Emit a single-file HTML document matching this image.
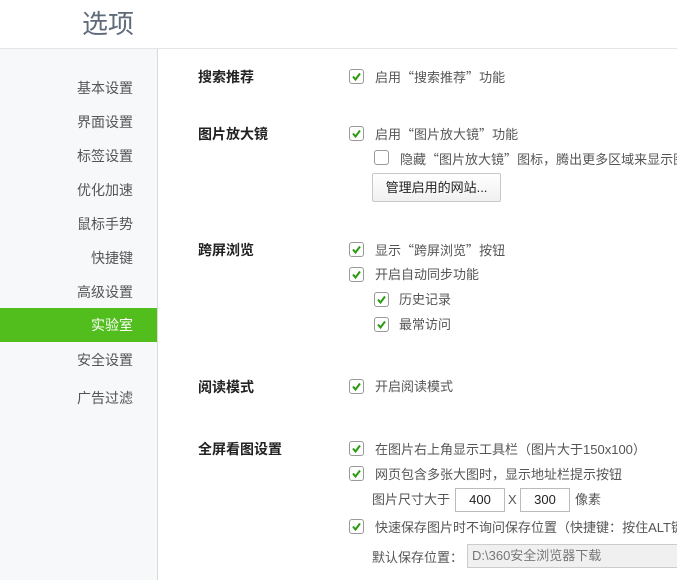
<!DOCTYPE html><html><head><meta charset="utf-8"><style>
body{margin:0;width:677px;height:580px;overflow:hidden;background:#fff;font-family:"Liberation Sans","Noto Sans CJK SC",sans-serif;font-size:13px;color:#555;position:relative}
.a{position:absolute;white-space:nowrap;line-height:16px}
.q{font-family:"Noto Sans CJK SC",sans-serif}
#hd{position:absolute;left:0;top:0;width:677px;height:48px;border-bottom:1px solid #e5e5e5}
#hd span{position:absolute;left:82px;top:8px;font-size:26px;color:#5f6b78;line-height:32px}
#sb{position:absolute;left:0;top:49px;width:157px;height:531px;background:#f7f8fa;border-right:1px solid #d9d9d9}
.si{position:absolute;right:24px;font-size:14px;color:#555;line-height:16px}
#act{position:absolute;left:0;top:308px;width:157px;height:34px;background:#52be1e}
.h{position:absolute;left:198px;font-weight:bold;color:#222;line-height:16px;font-size:14px}
.cb{position:absolute;width:13px;height:13px;border:1px solid #999;border-radius:3px;background:#fff}
.cb svg{position:absolute;left:1px;top:1px}
.btn{position:absolute;border:1px solid #c8c8c8;border-radius:2px;background:linear-gradient(#fff,#f0f0f0);color:#222;text-align:center}
.in{position:absolute;border:1px solid #bbb;background:#fff;color:#222;text-align:center;line-height:22px;height:22px}
</style></head><body>
<div id="hd"><span>选项</span></div>
<div id="sb">
<div class="si" style="top:31px">基本设置</div>
<div class="si" style="top:65px">界面设置</div>
<div class="si" style="top:99px">标签设置</div>
<div class="si" style="top:133px">优化加速</div>
<div class="si" style="top:167px">鼠标手势</div>
<div class="si" style="top:201px">快捷键</div>
<div class="si" style="top:235px">高级设置</div>
<div class="si" style="top:303px">安全设置</div>
<div class="si" style="top:341px">广告过滤</div>
</div>
<div id="act"></div><div class="a" style="left:91px;top:317px;color:#fff;font-size:14px">实验室</div>

<div class="h" style="top:69px">搜索推荐</div>
<div class="h" style="top:126px">图片放大镜</div>
<div class="h" style="top:242px">跨屏浏览</div>
<div class="h" style="top:379px">阅读模式</div>
<div class="h" style="top:441px">全屏看图设置</div>

<svg width="0" height="0" style="position:absolute"><defs><symbol id="ck" viewBox="0 0 11 11"><path d="M2 5.5 L4.5 8.5 L9 2.5" stroke="#2a9a10" stroke-width="2" fill="none"/></symbol></defs></svg>

<div class="cb" style="left:349px;top:69px"><svg width="11" height="11"><use href="#ck"/></svg></div><div class="a" style="left:375px;top:69px">启用<span class="q">“</span>搜索推荐<span class="q">”</span>功能</div>
<div class="cb" style="left:349px;top:126px"><svg width="11" height="11"><use href="#ck"/></svg></div><div class="a" style="left:375px;top:126px">启用<span class="q">“</span>图片放大镜<span class="q">”</span>功能</div>
<div class="cb" style="left:374px;top:150px"></div><div class="a" style="left:400px;top:151px">隐藏<span class="q">“</span>图片放大镜<span class="q">”</span>图标，腾出更多区域来显示图</div>
<div class="btn" style="left:372px;top:173px;width:127px;height:27px;line-height:27px">管理启用的网站...</div>

<div class="cb" style="left:349px;top:242px"><svg width="11" height="11"><use href="#ck"/></svg></div><div class="a" style="left:375px;top:242px">显示<span class="q">“</span>跨屏浏览<span class="q">”</span>按钮</div>
<div class="cb" style="left:349px;top:267px"><svg width="11" height="11"><use href="#ck"/></svg></div><div class="a" style="left:375px;top:267px">开启自动同步功能</div>
<div class="cb" style="left:374px;top:292px"><svg width="11" height="11"><use href="#ck"/></svg></div><div class="a" style="left:399px;top:292px">历史记录</div>
<div class="cb" style="left:374px;top:317px"><svg width="11" height="11"><use href="#ck"/></svg></div><div class="a" style="left:399px;top:317px">最常访问</div>

<div class="cb" style="left:349px;top:379px"><svg width="11" height="11"><use href="#ck"/></svg></div><div class="a" style="left:375px;top:379px">开启阅读模式</div>

<div class="cb" style="left:349px;top:441px"><svg width="11" height="11"><use href="#ck"/></svg></div><div class="a" style="left:375px;top:441px">在图片右上角显示工具栏<span class="q">（</span>图片大于150x100<span class="q">）</span></div>
<div class="cb" style="left:349px;top:466px"><svg width="11" height="11"><use href="#ck"/></svg></div><div class="a" style="left:375px;top:466px">网页包含多张大图时<span class="q">，</span>显示地址栏提示按钮</div>
<div class="a" style="left:372px;top:492px">图片尺寸大于</div>
<div class="in" style="left:455px;top:488px;width:48px">400</div>
<div class="a" style="left:508px;top:492px">X</div>
<div class="in" style="left:520px;top:488px;width:48px">300</div>
<div class="a" style="left:575px;top:492px">像素</div>
<div class="cb" style="left:349px;top:519px"><svg width="11" height="11"><use href="#ck"/></svg></div><div class="a" style="left:375px;top:519px">快速保存图片时不询问保存位置<span class="q">（</span>快捷键<span class="q">：</span>按住ALT键</div>
<div class="a" style="left:372px;top:549px">默认保存位置<span class="q">：</span></div>
<div class="in" style="left:467px;top:544px;width:215px;background:#f0f0f0;color:#777;text-align:left;padding-left:4px;border-color:#ccc">D:\360安全浏览器下载</div>
</body></html>
